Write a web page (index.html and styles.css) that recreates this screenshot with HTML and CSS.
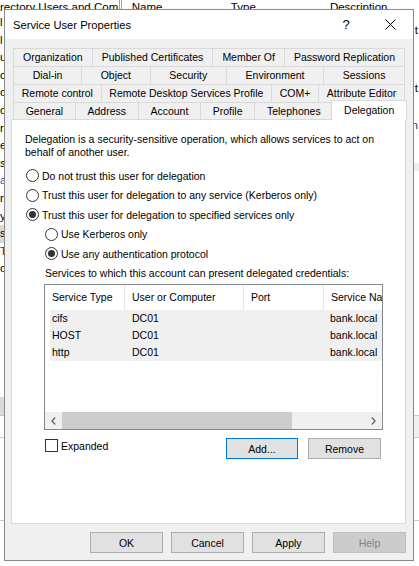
FILE: index.html
```html
<!DOCTYPE html>
<html>
<head>
<meta charset="utf-8">
<link rel="stylesheet" href="styles.css">
</head>
<body>
<div class="desktop">
  <div class="bg-header">
    <span class="bg-title">rectory Users and Com</span>
    <span class="bg-col">Name</span>
    <span class="bg-col">Type</span>
    <span class="bg-col">Description</span>
  </div>
  <div class="bg-main">
    <div class="tree">
      <div>l</div><div>l</div><div>u</div><div>o</div><div>o</div><div>o</div><div>r</div><div>e</div><div>s</div><div class="blue">a</div><div>r</div><div>y</div><div class="sel">s</div><div class="red">T</div><div>o</div>
    </div>
    <div class="list">
      <div class="frag f1">t</div>
      <div class="frag f2">t</div>
      <div class="frag f3">n</div>
      <div class="band"></div>
    </div>
  </div>
  <div class="bg-strip1"></div>
  <div class="bg-strip2"></div>
  <div class="bg-strip3"></div>

  <div class="dialog">
    <div class="titlebar">
      <span class="title">Service User Properties</span>
      <span class="help-btn">?</span>
      <span class="close-btn"><svg width="11" height="11" viewBox="0 0 11 11"><path d="M0.5 0.5L10.5 10.5M10.5 0.5L0.5 10.5" stroke="#000" stroke-width="1" fill="none"/></svg></span>
    </div>
    <div class="dlg-body">
      <div class="tabstrip">
        <div class="tabrow">
          <div class="tab">Organization</div><div class="tab">Published Certificates</div><div class="tab">Member Of</div><div class="tab">Password Replication</div>
        </div>
        <div class="tabrow">
          <div class="tab">Dial-in</div><div class="tab">Object</div><div class="tab">Security</div><div class="tab">Environment</div><div class="tab">Sessions</div>
        </div>
        <div class="tabrow">
          <div class="tab">Remote control</div><div class="tab">Remote Desktop Services Profile</div><div class="tab">COM+</div><div class="tab">Attribute Editor</div>
        </div>
        <div class="tabrow last">
          <div class="tab">General</div><div class="tab">Address</div><div class="tab">Account</div><div class="tab">Profile</div><div class="tab">Telephones</div><div class="tab active">Delegation</div>
        </div>
      </div>
      <div class="panel">
        <p class="intro">Delegation is a security-sensitive operation, which allows services to act on<br>behalf of another user.</p>
        <div class="options">
          <div class="radio"><span class="rb"></span>Do not trust this user for delegation</div>
          <div class="radio"><span class="rb"></span>Trust this user for delegation to any service (Kerberos only)</div>
          <div class="radio"><span class="rb on"></span>Trust this user for delegation to specified services only</div>
          <div class="sub">
            <div class="radio"><span class="rb"></span>Use Kerberos only</div>
            <div class="radio"><span class="rb on"></span>Use any authentication protocol</div>
            <div class="caption">Services to which this account can present delegated credentials:</div>
            <div class="listview">
              <div class="lv-header">
                <div class="lv-hcol w1">Service Type</div>
                <div class="lv-hcol w2">User or Computer</div>
                <div class="lv-hcol w3">Port</div>
                <div class="lv-hcol w4">Service Name</div>
              </div>
              <div class="lv-rows">
                <div class="lv-row"><div class="c1">cifs</div><div class="c2">DC01</div><div class="c3"></div><div class="c4">bank.local</div></div>
                <div class="lv-row"><div class="c1">HOST</div><div class="c2">DC01</div><div class="c3"></div><div class="c4">bank.local</div></div>
                <div class="lv-row"><div class="c1">http</div><div class="c2">DC01</div><div class="c3"></div><div class="c4">bank.local</div></div>
              </div>
              <div class="lv-fill"></div>
              <div class="hscroll">
                <div class="sb-arrow"><svg width="5" height="8" viewBox="0 0 5 8"><path d="M4.2 0.5L0.9 4l3.3 3.5" fill="none" stroke="#606060" stroke-width="1.2"/></svg></div>
                <div class="sb-track"><div class="sb-thumb"></div></div>
                <div class="sb-arrow"><svg width="5" height="8" viewBox="0 0 5 8"><path d="M0.8 0.5L4.1 4l-3.3 3.5" fill="none" stroke="#606060" stroke-width="1.2"/></svg></div>
              </div>
            </div>
            <div class="list-actions">
              <div class="check"><span class="cb"></span>Expanded</div>
              <div class="btns">
                <button class="btn default">Add...</button>
                <button class="btn wide">Remove</button>
              </div>
            </div>
          </div>
        </div>
      </div>
      <div class="footer">
        <button class="btn wide">OK</button>
        <button class="btn wide">Cancel</button>
        <button class="btn wide">Apply</button>
        <button class="btn wide disabled">Help</button>
      </div>
    </div>
  </div>
</div>
</body>
</html>
```

FILE: styles.css
```css
html, body {
  margin: 0;
  padding: 0;
}
body {
  font-family: "Liberation Sans", Arial, sans-serif;
  color: #000;
}
.desktop {
  position: relative;
  width: 419px;
  height: 566px;
  overflow: hidden;
  background: #fff;
  display: flex;
  flex-direction: column;
}

/* background window */
.bg-header {
  flex: none;
  height: 14px;
  display: flex;
  font-size: 11.5px;
  line-height: 14px;
  white-space: nowrap;
}
.bg-title {
  width: 120px;
  overflow: hidden;
  border-right: 3px double #a0a0a0;
}
.bg-col {
  width: 90px;
  padding-left: 10px;
  overflow: hidden;
}
.bg-main {
  flex: none;
  height: 383px;
  display: flex;
}
.tree {
  width: 122px;
  font-size: 11.5px;
  line-height: 17.6px;
}
.tree .sel { background: #d9d9d9; }
.tree .red { color: #b00000; }
.tree .blue { color: #1b55b0; }
.list {
  flex: 1;
  font-size: 11.5px;
  line-height: 14px;
  text-align: right;
}
.frag { padding-right: 1px; }
.f1 { margin-top: 9px; }
.f2 { margin-top: 44px; }
.f3 { margin-top: 23px; color: #1a3b8a; }
.band {
  margin-top: 31px;
  height: 8px;
  background: #eeeeee;
}
.bg-strip1 {
  flex: none;
  height: 18px;
  border-bottom: 1px solid #c8c8c8;
  background: linear-gradient(to right, #d9d9d9 0 60px, #fff 60px);
}
.bg-strip2 {
  flex: none;
  height: 21px;
  border-bottom: 1px solid #c8c8c8;
  background: linear-gradient(to right, #fff 0 360px, #f0f0f0 360px);
}
.bg-strip3 {
  flex: none;
  height: 82px;
  border-bottom: 1px solid #c8c8c8;
}

/* dialog window */
.dialog {
  position: absolute;
  left: 4px;
  top: 9px;
  width: 410px;
  height: 552px;
  box-sizing: border-box;
  border: 1px solid #8a8a8a;
  background: #f0f0f0;
  display: flex;
  flex-direction: column;
}
.titlebar {
  flex: none;
  height: 29px;
  background: #fff;
  display: flex;
  align-items: center;
  padding-left: 8px;
}
.title {
  flex: 1;
  font-size: 11.2px;
  white-space: nowrap;
}
.help-btn {
  width: 44px;
  text-align: center;
  font-size: 13px;
}
.close-btn {
  width: 45px;
  display: flex;
  justify-content: center;
}
.close-btn svg { display: block; }

.dlg-body {
  flex: 1;
  min-height: 0;
  display: flex;
  flex-direction: column;
  padding: 9px 7px 0 6px;
}

/* tabs */
.tabstrip {
  flex: none;
  margin: 0 1px 0 2px;
  font-size: 10.5px;
}
.tabrow {
  display: flex;
  height: 18px;
}
.tabrow.last { height: 17px; }
.tab {
  flex: 1 1 auto;
  box-sizing: border-box;
  border: 1px solid #d9d9d9;
  border-bottom: none;
  margin-left: -1px;
  text-align: center;
  line-height: 16px;
  white-space: nowrap;
  background: #f0f0f0;
}
.tab:first-child { margin-left: 0; }
.tab.active {
  position: relative;
  z-index: 1;
  background: #fff;
  margin: -2px -2px -1px -2px;
  line-height: 18px;
}

/* panel */
.panel {
  flex: none;
  height: 405px;
  box-sizing: border-box;
  border: 1px solid #d9d9d9;
  background: #fff;
  padding: 13px 22px 0 13px;
  font-size: 10.5px;
}
.intro {
  margin: 0;
  line-height: 13px;
  white-space: nowrap;
}
.options { margin-top: 7px; }
.radio {
  display: flex;
  align-items: center;
  height: 19.5px;
  white-space: nowrap;
}
.rb {
  position: relative;
  flex: none;
  width: 13px;
  height: 13px;
  box-sizing: border-box;
  border: 1px solid #333;
  border-radius: 50%;
  background: #fff;
  margin: 0 3px 0 1px;
}
.rb.on::after {
  content: "";
  position: absolute;
  left: 2px;
  top: 2px;
  width: 7px;
  height: 7px;
  border-radius: 50%;
  background: #333;
}
.sub { margin-left: 19px; }
.caption {
  height: 19.5px;
  line-height: 19.5px;
  white-space: nowrap;
  padding-left: 1px;
}

/* list view */
.listview {
  margin-top: 1px;
  height: 146px;
  box-sizing: border-box;
  border: 1px solid #828790;
  background: #fff;
  display: flex;
  flex-direction: column;
  overflow: hidden;
}
.lv-header {
  flex: none;
  display: flex;
  height: 25px;
}
.lv-hcol {
  box-sizing: border-box;
  padding-left: 7px;
  border-right: 1px solid #e5e5e5;
  line-height: 25px;
  white-space: nowrap;
  overflow: hidden;
}
.w1 { width: 80px; }
.w2 { width: 119px; }
.w3 { width: 80px; }
.w4 { flex: 1; border-right: none; }
.lv-rows {
  flex: none;
  margin-left: 5px;
}
.lv-row {
  display: flex;
  height: 17px;
  line-height: 17px;
  background: #f0f0f0;
  white-space: nowrap;
}
.c1 { width: 75px; padding-left: 2px; box-sizing: border-box; }
.c2 { width: 119px; padding-left: 7px; box-sizing: border-box; }
.c3 { width: 80px; }
.c4 { flex: 1; padding-left: 6px; overflow: hidden; }
.lv-fill { flex: 1; }
.hscroll {
  flex: none;
  height: 17px;
  display: flex;
  background: #f0f0f0;
}
.sb-arrow {
  width: 17px;
  display: flex;
  align-items: center;
  justify-content: center;
}
.sb-arrow svg { display: block; }
.sb-track {
  flex: 1;
  display: flex;
}
.sb-thumb {
  width: 76%;
  background: #cdcdcd;
}

.list-actions {
  display: flex;
  align-items: flex-start;
  margin-top: 8px;
  margin-right: 2px;
}
.check {
  display: flex;
  align-items: center;
  height: 13px;
  margin-top: 1px;
  padding-left: 1px;
}
.cb {
  width: 13px;
  height: 13px;
  box-sizing: border-box;
  border: 1px solid #333;
  background: #fff;
  margin-right: 3px;
}
.btns {
  margin-left: auto;
  display: flex;
  gap: 10px;
}
.btn {
  width: 72px;
  height: 21px;
  box-sizing: border-box;
  border: 1px solid #adadad;
  background: #e1e1e1;
  font-family: "Liberation Sans", Arial, sans-serif;
  font-size: 10.5px;
  color: #000;
  padding: 0;
  margin: 0;
}
.btn.wide { width: 73px; }
.btn.default { border-color: #0078d7; }
.btn.disabled {
  background: #cccccc;
  border-color: #bfbfbf;
  color: #838383;
}

.footer {
  flex: none;
  display: flex;
  justify-content: flex-end;
  gap: 8px;
  padding-top: 8px;
}
```
